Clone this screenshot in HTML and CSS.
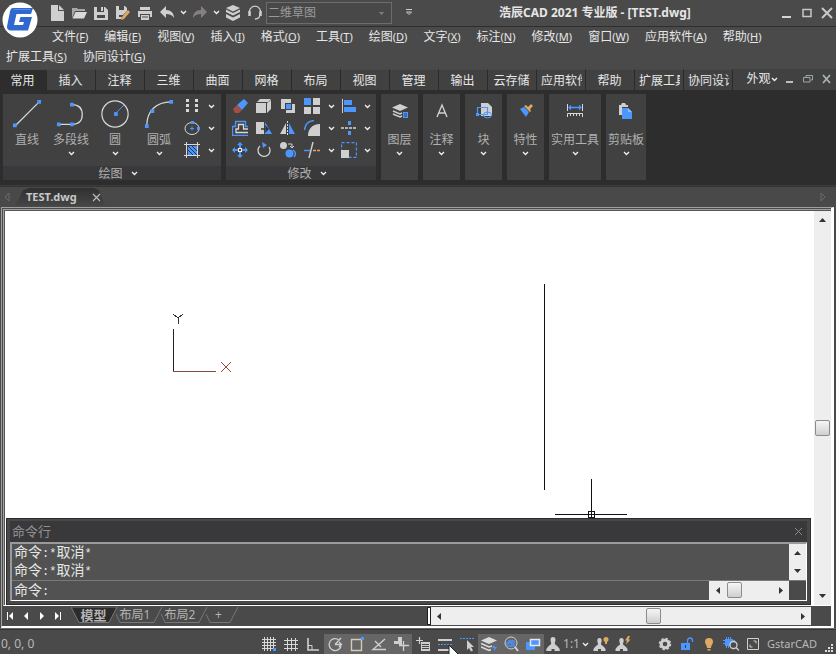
FILE: index.html
```
<!DOCTYPE html>
<html lang="zh-CN">
<head>
    <meta charset="UTF-8">
    <title>浩辰CAD 2021 专业版 - [TEST.dwg]</title>
    <link rel="stylesheet" href="styles.css">
</head>
<body>
    <!-- shared icons -->
    <svg class="defs" width="0" height="0" aria-hidden="true">
        <symbol id="chev" viewBox="0 0 7 5"><path d="M1 1l2.500 2.500L6 1" fill="none" stroke="#f0f0f0" stroke-width="1.300"/></symbol>
        <symbol id="up" viewBox="0 0 7 4"><path d="M0 4l3.500-4L7 4z" fill="#333"/></symbol>
        <symbol id="down" viewBox="0 0 7 4"><path d="M0 0h7L3.500 4z" fill="#333"/></symbol>
        <symbol id="left" viewBox="0 0 4 7"><path d="M4 0v7L0 3.500z" fill="#333"/></symbol>
        <symbol id="right" viewBox="0 0 4 7"><path d="M0 0v7l4-3.500z" fill="#333"/></symbol>
        <symbol id="stack" viewBox="0 0 16 16"><path d="M8 0l7 3L8 6.500 1 3zM1 4.500l7 3.500 7-3.500V7l-7 3.500L1 7zM1 9l7 3.500L15 9v3.500L8 16l-7-3.500z" fill="#cfcfcf"/></symbol>
        <symbol id="person" viewBox="0 0 16 16"><path d="M8 1c1.700 0 2.500 1.200 2.500 2.800S9.800 6 9.800 7.500c0 1 1.400 1.500 2.900 3l2 2.500v2H9.500v-2h-3v2H1.300v-2l2-2.500c1.500-1.500 2.900-2 2.900-3C6.200 6 5.500 5.500 5.500 3.800S6.300 1 8 1z" fill="#cfcfcf"/></symbol>
    </svg>

    <div class="app">
        <svg class="logo" viewBox="0 0 36 36" role="img" aria-label="GstarCAD">
            <circle cx="18" cy="18" r="17.500" fill="#fff"/>
            <path d="M11 6h20l-2 6H14.500l-2.500 11h9l1-3h-5l1.500-5h11.500L26 28.500H9C5.500 28.500 4.500 26 5.300 23L8 9.500C8.500 7 9.500 6 11 6z" fill="#2f68cf"/>
            <path d="M11.500 7.500h17" stroke="#4f8df0" fill="none"/>
        </svg>

        <header class="titlebar">
            <div class="quick">
                <button aria-label="新建"><svg viewBox="0 0 16 16"><path d="M2 0h7v6h6v10H2zM10 0l5 5h-5z" fill="#cfcfcf"/></svg></button>
                <button aria-label="打开"><svg viewBox="0 0 16 16"><path d="M1 13V3h5l1 1h7v2H4z" fill="#a8a8a8"/><path d="M4.500 7H16l-3 6.500H1.500z" fill="#dadada"/></svg></button>
                <button aria-label="保存"><svg viewBox="0 0 16 16"><path d="M1 2h3v5h7V2h1l3 3v10H1zM4 10v3h8v-3zM8 2h2v4H8z" fill="#cfcfcf" fill-rule="evenodd"/></svg></button>
                <button aria-label="另存为"><svg viewBox="0 0 16 16"><path d="M1 1h3v4h5V1h1l2 2v3l-4 4H4v2h3l-1 2H1z" fill="#cfcfcf"/><path d="M7 12l6-7 2 2-6 7-3 1z" fill="#e0a860"/></svg></button>
                <button aria-label="打印"><svg viewBox="0 0 16 16"><path d="M3 2h10v3H3zM1 6h14v6h-2V9H3v3H1zM4 10h8v5H4zM5 11.500v1h6v-1z" fill="#cfcfcf" fill-rule="evenodd"/></svg></button>
                <button aria-label="撤销"><svg viewBox="0 0 16 16"><path d="M1 7l6-6v4c5 0 8 3 8 8-2-3-4-4-8-4v4z" fill="#cfcfcf"/></svg></button>
                <button class="drop" aria-label="撤销列表"><svg><use href="#chev"/></svg></button>
                <button aria-label="重做"><svg viewBox="0 0 16 16"><path d="M15 7L9 1v4c-5 0-8 3-8 8 2-3 4-4 8-4v4z" fill="#858080"/></svg></button>
                <button class="drop" aria-label="重做列表"><svg><use href="#chev"/></svg></button>
                <button aria-label="图层"><svg><use href="#stack"/></svg></button>
                <button aria-label="在线支持"><svg viewBox="0 0 16 16" fill="none" stroke="#cfcfcf"><path d="M3 9a5.500 5.500 0 1 1 10 0c0 4-2 5-5 5" stroke-width="1.300"/><path d="M2.500 6v5M13.500 6v5" stroke-width="2.500"/></svg></button>
            </div>
            <select class="workspace" aria-label="工作空间" disabled>
                <option>二维草图</option>
            </select>
            <button class="more" aria-label="自定义"><svg viewBox="0 0 8 7"><path d="M1 .5h6M1.500 3L4 5.500 6.500 3z" fill="none" stroke="#ccc"/></svg></button>
            <h1>浩辰CAD 2021 专业版 - [TEST.dwg]</h1>
            <div class="winctl">
                <button aria-label="最小化"><svg viewBox="0 0 12 12"><path d="M1 10h9" stroke="#d5d5d5" stroke-width="2"/></svg></button>
                <button aria-label="最大化"><svg viewBox="0 0 12 12"><path d="M1 2.500h8v7H1z" fill="none" stroke="#c8c8c8" stroke-width="1.500"/></svg></button>
                <button aria-label="关闭"><svg viewBox="0 0 12 12"><path d="M1 1l10 10M11 1L1 11" stroke="#c8c8c8" stroke-width="2"/></svg></button>
            </div>
        </header>

        <nav class="menus">
            <div class="menurow first">
                <a href="#">文件<small>(<u>F</u>)</small></a>
                <a href="#">编辑<small>(<u>E</u>)</small></a>
                <a href="#">视图<small>(<u>V</u>)</small></a>
                <a href="#">插入<small>(<u>I</u>)</small></a>
                <a href="#">格式<small>(<u>O</u>)</small></a>
                <a href="#">工具<small>(<u>T</u>)</small></a>
                <a href="#">绘图<small>(<u>D</u>)</small></a>
                <a href="#">文字<small>(<u>X</u>)</small></a>
                <a href="#">标注<small>(<u>N</u>)</small></a>
                <a href="#">修改<small>(<u>M</u>)</small></a>
                <a href="#">窗口<small>(<u>W</u>)</small></a>
                <a href="#">应用软件<small>(<u>A</u>)</small></a>
                <a href="#">帮助<small>(<u>H</u>)</small></a>
            </div>
            <div class="menurow">
                <a href="#">扩展工具<small>(<u>S</u>)</small></a>
                <a href="#">协同设计<small>(<u>G</u>)</small></a>
            </div>
        </nav>

        <div class="tabs">
            <button class="tab active">常用</button>
            <button class="tab">插入</button>
            <button class="tab">注释</button>
            <button class="tab">三维</button>
            <button class="tab">曲面</button>
            <button class="tab">网格</button>
            <button class="tab">布局</button>
            <button class="tab">视图</button>
            <button class="tab">管理</button>
            <button class="tab">输出</button>
            <button class="tab">云存储</button>
            <button class="tab long"><span>应用软件</span></button>
            <button class="tab">帮助</button>
            <button class="tab long"><span>扩展工具</span></button>
            <button class="tab long"><span>协同设计</span></button>
            <div class="docctl">
                <button class="look">外观<svg><use href="#chev"/></svg></button>
                <button aria-label="最小化"><svg viewBox="0 0 10 10"><path d="M2 8h7" stroke="#b8c0c0" stroke-width="2"/></svg></button>
                <button aria-label="还原"><svg viewBox="0 0 10 10" fill="none" stroke="#9aa8a8"><path d="M3 3V1.500h6.500V6H8M.5 3.500H7V8H.5z"/></svg></button>
                <button aria-label="关闭"><svg viewBox="0 0 10 10"><path d="M1 1l7 8M8 1L1 9" stroke="#a8b4b4" stroke-width="1.800"/></svg></button>
            </div>
        </div>

        <div class="ribbon">
            <section class="panel draw">
                <div class="body">
                    <button class="big"><svg viewBox="0 0 32 32"><path d="M4 28L29 3" stroke="#d8d8d8" stroke-width="1.300"/><path d="M1 26h4v4H1zM27 1h4v4h-4z" fill="#4c96ff"/></svg>直线</button>
                    <button class="big"><svg viewBox="0 0 32 32"><path d="M3 27h14c7 0 11-4 11-10.500S24 6 17 6" fill="none" stroke="#d8d8d8" stroke-width="1.300"/><path d="M1 25h4v4H1zM15 25h4v4h-4zM15 4h4v4h-4z" fill="#4c96ff"/></svg>多段线<svg class="chev"><use href="#chev"/></svg></button>
                    <button class="big"><svg viewBox="0 0 32 32"><circle cx="16" cy="16" r="14" fill="none" stroke="#d8d8d8" stroke-width="1.300"/><path d="M17 15l9-9" stroke="#4c96ff"/><path d="M15 14h4v4h-4z" fill="#4c96ff"/></svg>圆<svg class="chev"><use href="#chev"/></svg></button>
                    <button class="big"><svg viewBox="0 0 32 32"><path d="M3 28C3 13 13 3 29 3" fill="none" stroke="#d8d8d8" stroke-width="1.300"/><path d="M1 27h4v4H1zM7 11h4v4H7zM27 1h4v4h-4z" fill="#4c96ff"/></svg>圆弧<svg class="chev"><use href="#chev"/></svg></button>
                    <div class="smalls">
                        <button aria-label="点"><svg viewBox="0 0 16 16"><path d="M2 1h3v3H2zM2 6h3v3H2zM2 11h3v3H2zM11 1h3v3h-3zM11 6h3v3h-3zM11 11h3v3h-3z" fill="#d8d8d8"/></svg></button>
                        <button class="drop" aria-label="点选项"><svg><use href="#chev"/></svg></button>
                        <button aria-label="椭圆"><svg viewBox="0 0 16 16"><ellipse cx="8" cy="8.500" rx="7" ry="6" fill="none" stroke="#d8d8d8"/><path d="M7 1h3v3H7zM13 7h3v3h-3zM6 8h4v1H6zM7.500 6.500h1v4h-1z" fill="#4c96ff"/></svg></button>
                        <button class="drop" aria-label="椭圆选项"><svg><use href="#chev"/></svg></button>
                        <button aria-label="填充"><svg viewBox="0 0 16 16"><path d="M4 4h9v9H4z" fill="#4c96ff"/><path d="M4 8l5 5M4 4l9 9M8 4l5 5" stroke="#234"/><path d="M0 2.500h16M0 13.500h16M2.500 0v16M13.500 0v16" stroke="#d8d8d8"/></svg></button>
                        <button class="drop" aria-label="填充选项"><svg><use href="#chev"/></svg></button>
                    </div>
                </div>
                <button class="caption">绘图<svg class="chev"><use href="#chev"/></svg></button>
            </section>

            <section class="panel modify">
                <div class="body grid">
                    <button aria-label="删除"><svg viewBox="0 0 16 16"><path d="M5 7l7-6 4 4-6 7z" fill="#4c96ff"/><path d="M1 11l4-4 5 5-3 3H3z" fill="#a05044"/></svg></button>
                    <button aria-label="复制"><svg viewBox="0 0 16 16"><path d="M0 5h10v10H0zM1 4l3-3h11l-3 3zM11 5l4-3v9l-4 4z" fill="#cfcfcf"/></svg></button>
                    <button aria-label="重叠"><svg viewBox="0 0 16 16"><path d="M1 1h10v4H5v6H1zM12 6h3v9H6v-3h6z" fill="#cfcfcf"/><path d="M6 6h5v5H6z" fill="#4c96ff"/></svg></button>
                    <button aria-label="阵列"><svg viewBox="0 0 16 16"><path d="M0 0h7v7H0z" fill="#4c96ff"/><path d="M9 0h7v7H9zM0 9h7v7H0zM9 9h7v7H9z" fill="#cfcfcf"/></svg></button>
                    <button class="drop" aria-label="阵列选项"><svg><use href="#chev"/></svg></button>
                    <button aria-label="对齐"><svg viewBox="0 0 16 16"><path d="M1 1h1v14H1z" fill="#cfcfcf"/><path d="M3 2h8v5H3zM3 9h12v5H3z" fill="#4c96ff"/></svg></button>
                    <button class="drop" aria-label="对齐选项"><svg><use href="#chev"/></svg></button>
                    <button aria-label="偏移"><svg viewBox="0 0 16 16" fill="none"><path d="M16 15.500H.5v-9h3v-5h10v5H16" stroke="#4c96ff" stroke-width="1.300"/><path d="M16 12.500H4V9h2.500V4.500h5V9H16" stroke="#d8d8d8" stroke-width="1.300"/></svg></button>
                    <button aria-label="拉伸"><svg viewBox="0 0 16 16"><path d="M0 2h8v12H0z" fill="#cfcfcf"/><path d="M9 2l7 12H9z" fill="#4c96ff"/><path d="M5 9h7M9 6l3 3-3 3" fill="none" stroke="#333" stroke-width="1.500"/></svg></button>
                    <button aria-label="镜像"><svg viewBox="0 0 16 16"><path d="M6 3v11H0z" fill="#cfcfcf"/><path d="M9 3v11h6z" fill="#4c96ff"/><path d="M7.500 1v14" stroke="#d8d8d8" stroke-dasharray="2 1"/></svg></button>
                    <button aria-label="圆角"><svg viewBox="0 0 16 16"><path d="M.5 10C1 4 4 1 10 .5" fill="none" stroke="#4c96ff" stroke-width="1.400"/><path d="M4 16c0-7 4-12 12-12v12z" fill="#cfcfcf"/></svg></button>
                    <button class="drop" aria-label="圆角选项"><svg><use href="#chev"/></svg></button>
                    <button aria-label="打断"><svg viewBox="0 0 16 16"><path d="M0 8h16" stroke="#d8d8d8" stroke-width="1.300" stroke-dasharray="3 1"/><path d="M7 1h3v4H7zM7 11h3v4H7z" fill="#4c96ff"/></svg></button>
                    <button class="drop" aria-label="打断选项"><svg><use href="#chev"/></svg></button>
                    <button aria-label="移动"><svg viewBox="0 0 16 16"><path d="M8 0l3 3H9v4h4V5l3 3-3 3V9H9v4h2l-3 3-3-3h2V9H3v2L0 8l3-3v2h4V3H5z" fill="#4c96ff"/><path d="M6 6h4v4H6z" fill="#eee"/><path d="M7 7h2v2H7z" fill="#444"/></svg></button>
                    <button aria-label="旋转"><svg viewBox="0 0 16 16"><path d="M4 4a6 6 0 1 0 9 1" fill="none" stroke="#cfcfcf" stroke-width="1.300"/><path d="M6 0l5 3-4 3z" fill="#4c96ff"/></svg></button>
                    <button aria-label="缩放复制"><svg viewBox="0 0 16 16"><circle cx="3.500" cy="3.500" r="3.500" fill="#cfcfcf"/><path d="M8 2h4v4m-2-2l2 2 2-2" fill="none" stroke="#cfcfcf"/><path d="M13 8c3 2 3 5 1 7" fill="none" stroke="#4c96ff" stroke-width="1.500"/><circle cx="9.500" cy="11.500" r="4" fill="#4c96ff"/></svg></button>
                    <button aria-label="修剪"><svg viewBox="0 0 16 16"><path d="M0 8.500h6" stroke="#4c96ff" stroke-width="1.400"/><path d="M9 8.500h7" stroke="#e0a860" stroke-width="1.400" stroke-dasharray="3 1"/><path d="M5 16L9 0" stroke="#cfcfcf" stroke-width="1.400"/></svg></button>
                    <button class="drop" aria-label="修剪选项"><svg><use href="#chev"/></svg></button>
                    <button aria-label="缩放"><svg viewBox="0 0 16 16"><path d="M.5.500h15v15H.500z" fill="none" stroke="#4c96ff" stroke-width="1.300" stroke-dasharray="3 2"/><path d="M0 8h8v8H0z" fill="#cfcfcf"/></svg></button>
                    <button class="drop" aria-label="缩放选项"><svg><use href="#chev"/></svg></button>
                </div>
                <button class="caption">修改<svg class="chev"><use href="#chev"/></svg></button>
            </section>

            <button class="panel folded"><svg viewBox="0 0 16 16"><path d="M8 1l8 3.500L8 8 0 4.500z" fill="#cfcfcf"/><path d="M1 8l7 3 2-1M1 11l7 3 2-1" fill="none" stroke="#cfcfcf" stroke-width="1.400"/><path d="M11 9h5v6h-5z" fill="#4c96ff"/><path d="M12 11h3M12 13h3" stroke="#345"/></svg>图层<svg class="chev"><use href="#chev"/></svg></button>
            <button class="panel folded"><svg viewBox="0 0 16 16"><path d="M3 14L8 2l5 12M4.500 10h7" fill="none" stroke="#cfcfcf" stroke-width="1.400"/></svg>注释<svg class="chev"><use href="#chev"/></svg></button>
            <button class="panel folded"><svg viewBox="0 0 16 16"><path d="M5 0h7l4 4v9H5z" fill="#cfcfcf"/><path d="M1.500 4.500h10v7h-10z" fill="none" stroke="#4c96ff" stroke-width="1.200"/><ellipse cx="11.500" cy="12" rx="4" ry="3" fill="none" stroke="#4c96ff"/><path d="M0 10h3v3H0z" fill="#4c96ff"/></svg>块<svg class="chev"><use href="#chev"/></svg></button>
            <button class="panel folded"><svg viewBox="0 0 16 16"><path d="M2 6l4-2 5 5-3 5z" fill="#4c96ff"/><path d="M6 3l2-1 2 2 3-3 2 2-3 3 1 2-1 1z" fill="#e0a860"/></svg>特性<svg class="chev"><use href="#chev"/></svg></button>
            <button class="panel folded tools"><svg viewBox="0 0 16 16" fill="none"><path d="M.5 1v7M15.500 1v7" stroke="#d8d8d8"/><path d="M2 4.500h12M4 2.500l-2 2 2 2M12 2.500l2 2-2 2" stroke="#4c96ff" stroke-width="1.300"/><path d="M.5 14v-3.500h15V14M3.500 11v2M6.500 11v2M9.500 11v2M12.500 11v2" stroke="#d8d8d8"/></svg>实用工具<svg class="chev"><use href="#chev"/></svg></button>
            <button class="panel folded clip"><svg viewBox="0 0 16 16"><path d="M1 2h2l1-2h3l1 2h2v2H4v8H1z" fill="#cfcfcf"/><path d="M4 5h6l4 4v7H4z" fill="#4c96ff"/><path d="M10 5l4 4h-4z" fill="#8fbcff"/></svg>剪贴板<svg class="chev"><use href="#chev"/></svg></button>
        </div>

        <div class="doctabs">
            <button class="scroller" aria-label="向左"><svg viewBox="0 0 6 10"><path d="M5 1v8L1 5z" fill="none" stroke="#6a6a6a"/></svg></button>
            <div class="doctab">
                <span>TEST.dwg</span>
                <button aria-label="关闭"><svg viewBox="0 0 9 9"><path d="M1 1l7 7M8 1L1 8" stroke="#bbb" stroke-width="1.200"/></svg></button>
            </div>
            <button class="scroller" aria-label="向右"><svg viewBox="0 0 6 10"><path d="M1 1v8l4-4z" fill="none" stroke="#6a6a6a"/></svg></button>
        </div>

        <main class="frame">
            <div class="view">
                <div class="work">
                    <div class="canvas">
                        <svg width="808" height="306" shape-rendering="crispEdges">
                            <!-- UCS icon -->
                            <path d="M168.500 117v43" stroke="#222"/>
                            <path d="M168 159.500h43" stroke="#8a4a3a"/>
                            <path d="M168 102l5 4 5-4M173.500 106v6" fill="none" stroke="#333"/>
                            <path d="M216 150l10 10M226 150l-10 10" stroke="#a0452f"/>
                            <!-- drawn line -->
                            <path d="M539.500 72v206" stroke="#111"/>
                            <!-- crosshair -->
                            <path d="M586.500 267v39M550 302.500h72" stroke="#111"/>
                            <path d="M583.500 299.500h6v6h-6z" fill="none" stroke="#111"/>
                        </svg>
                    </div>
                    <section class="command">
                        <div class="cmdtitle">命令行<button aria-label="关闭"><svg viewBox="0 0 9 9"><path d="M1 1l7 7M8 1L1 8" stroke="#888"/></svg></button></div>
                        <div class="cmdbox">
                            <div class="history">
                                <div class="lines">
                                    <p>命令<span>:*</span>取消<span>*</span></p>
                                    <p>命令<span>:*</span>取消<span>*</span></p>
                                </div>
                                <div class="vbar">
                                    <button aria-label="向上"><svg><use href="#up"/></svg></button>
                                    <button aria-label="向下"><svg><use href="#down"/></svg></button>
                                </div>
                            </div>
                            <div class="prompt">
                                <label for="cmd">命令<span>:</span></label>
                                <input id="cmd" type="text">
                                <div class="hbar">
                                    <button aria-label="向左"><svg><use href="#left"/></svg></button>
                                    <i class="thumb"></i>
                                    <i class="gap" style="flex-grow:1"></i>
                                    <button aria-label="向右"><svg><use href="#right"/></svg></button>
                                </div>
                                <i class="corner"></i>
                            </div>
                        </div>
                    </section>
                </div>
                <div class="vbar main">
                    <button aria-label="向上"><svg><use href="#up"/></svg></button>
                    <i class="gap" style="flex-grow:56"></i>
                    <i class="thumb"></i>
                    <i class="gap" style="flex-grow:44"></i>
                    <button aria-label="向下"><svg><use href="#down"/></svg></button>
                </div>
            </div>
            <div class="layouts">
                <div class="sheets">
                    <button class="nav" aria-label="第一个"><svg viewBox="0 0 8 8"><path d="M1 0h1v8H1zM7 0v8L3 4z" fill="#fff"/></svg></button>
                    <button class="nav" aria-label="上一个"><svg viewBox="0 0 8 8"><path d="M6 0v8L2 4z" fill="#fff"/></svg></button>
                    <button class="nav" aria-label="下一个"><svg viewBox="0 0 8 8"><path d="M2 0v8l4-4z" fill="#fff"/></svg></button>
                    <button class="nav" aria-label="最后一个"><svg viewBox="0 0 8 8"><path d="M1 0v8l4-4zM6 0h1v8H6z" fill="#fff"/></svg></button>
                    <button class="sheet on"><svg viewBox="0 0 47 17" preserveAspectRatio="none"><path d="M0 0l8 15.500h30L46 0z" fill="#2b2b2b" stroke="#777"/></svg><span>模型</span></button>
                    <button class="sheet"><svg viewBox="0 0 47 17" preserveAspectRatio="none"><path d="M0 7l4 8.500h34L46 0" fill="none" stroke="#777"/></svg><span>布局1</span></button>
                    <button class="sheet"><svg viewBox="0 0 47 17" preserveAspectRatio="none"><path d="M0 7l4 8.500h34L46 0" fill="none" stroke="#777"/></svg><span>布局2</span></button>
                    <button class="sheet add" aria-label="新建布局"><svg viewBox="0 0 47 17" preserveAspectRatio="none"><path d="M0 7l4 8.500h20L32 0" fill="none" stroke="#777"/></svg><span>+</span></button>
                </div>
                <i class="splitter"></i>
                <div class="hbar main">
                    <button aria-label="向左"><svg><use href="#left"/></svg></button>
                    <i class="gap" style="flex-grow:60"></i>
                    <i class="thumb"></i>
                    <i class="gap" style="flex-grow:40"></i>
                    <button aria-label="向右"><svg><use href="#right"/></svg></button>
                </div>
            </div>
        </main>

        <footer class="status">
            <span class="coords">0, 0, 0</span>
            <button aria-label="捕捉"><svg viewBox="0 0 16 16"><path d="M1 3.500h14M1 6.500h14M1 9.500h14M1 12.500h11M3.500 1v14M6.500 1v14M9.500 1v14M12.500 1v11" stroke="#d8d8d8"/><path d="M12 12h3v3h-3z" fill="#4c96ff"/></svg></button>
            <button aria-label="栅格"><svg viewBox="0 0 16 16"><path d="M1 4.500h14M1 8.500h14M1 12.500h14M4.500 2v13M8.500 2v13M12.500 2v13" stroke="#d8d8d8"/></svg></button>
            <button aria-label="正交"><svg viewBox="0 0 16 16" fill="none" stroke="#cfcfcf"><path d="M3 2v12h11" stroke-width="1.600"/><path d="M3 9.500h4V14"/></svg></button>
            <button class="on" aria-label="极轴"><svg viewBox="0 0 16 16" fill="none" stroke="#cfcfcf" stroke-width="1.300"><path d="M12 4a6 6 0 1 0 2 6M8 8.500h7M8 8.500L14 2M12 6l2.500 2.500L12 11"/></svg></button>
            <button class="on" aria-label="对象捕捉"><svg viewBox="0 0 16 16"><path d="M2.500 3.500h10v11h-10z" fill="none" stroke="#d8c8b8" stroke-width="1.400"/><path d="M12 1h3v3h-3z" fill="#4c96ff"/></svg></button>
            <button class="on" aria-label="对象追踪"><svg viewBox="0 0 16 16"><path d="M14 3L2 13.500h13M4 5l6 6" fill="none" stroke="#cfcfcf" stroke-width="1.400"/></svg></button>
            <button class="on" aria-label="动态UCS"><svg viewBox="0 0 16 16"><path d="M5 1h4v9H6V8H1V5h4z" fill="#cfcfcf"/><path d="M10.500 5v10M6 9.500h10" stroke="#cfcfcf" stroke-width="1.300"/></svg></button>
            <button aria-label="动态输入"><svg viewBox="0 0 16 16"><path d="M4.500 1v7M1 4.500h7" stroke="#cfcfcf" stroke-width="1.200"/><path d="M6 6h9v9H6zM7 8v1h7V8zM7 10v1h7v-1zM7 12v1h7v-1z" fill="#cfcfcf" fill-rule="evenodd"/></svg></button>
            <button class="lw" aria-label="线宽"><svg viewBox="0 0 16 16"><path d="M1 4h14M1 14h14" stroke="#cfcfcf" stroke-width="2"/><path d="M1 8.500h14" stroke="#4c96ff" stroke-dasharray="2 1"/></svg><svg class="pointer" viewBox="0 0 12 18"><path d="M1 1v14l3-3 2 5 3-1-2-5h4z" fill="#fff" stroke="#222"/></svg></button>
            <button aria-label="选择循环"><svg viewBox="0 0 16 16"><path d="M1 2.500h14" stroke="#4c96ff" stroke-dasharray="2 1"/><path d="M8 4v10l2-2 2 3.500 2-1-2-3.500h3z" fill="#cfcfcf"/></svg></button>
            <button class="on" aria-label="图层过滤"><svg viewBox="0 0 16 16"><path d="M8 1l8 3.500L8 8 0 4.500z" fill="#dcdcdc"/><path d="M0 7.500l8 3.500 3-1M0 11l8 3.500 2-1" fill="none" stroke="#dcdcdc" stroke-width="1.500"/><path d="M13 9l-2 3h2v3l3-4h-2z" fill="#4c96ff"/></svg></button>
            <button class="on" aria-label="快捷特性"><svg viewBox="0 0 16 16"><circle cx="8" cy="7" r="6" fill="none" stroke="#cfcfcf"/><path d="M12 11l3 4" stroke="#cfcfcf" stroke-width="2"/><path d="M5 5h6v6M4 7h5v3H4z" fill="none" stroke="#4c96ff" stroke-width="1.300"/></svg></button>
            <button class="on" aria-label="显示"><svg viewBox="0 0 16 16"><path d="M1 6h9v8H1z" fill="#4c96ff"/><path d="M5.500 3.500h9v6h-9z" fill="#4c96ff" stroke="#e8e8e8" stroke-width="1.500"/></svg></button>
            <button class="scale"><svg><use href="#person"/></svg>1:1<svg class="chev"><use href="#chev"/></svg></button>
            <button aria-label="注释可见"><svg viewBox="0 0 16 16"><path d="M6.500 2C8 2 8.700 3 8.700 4.500S8 7 8 8s1.500 1.500 3 3l1.500 2v2H8v-2H5v2H.5v-2L2 11c1.500-1.500 3-2 3-3S4.300 6 4.300 4.500 5 2 6.500 2z" fill="#cfcfcf"/><circle cx="13" cy="3.500" r="2.500" fill="#e0a860"/><path d="M12 5h2v3h-2z" fill="#e0a860"/></svg></button>
            <button aria-label="自动缩放"><svg viewBox="0 0 16 16"><path d="M6.500 2C8 2 8.700 3 8.700 4.500S8 7 8 8s1.500 1.500 3 3l1.500 2v2H8v-2H5v2H.5v-2L2 11c1.500-1.500 3-2 3-3S4.300 6 4.300 4.500 5 2 6.500 2z" fill="#cfcfcf"/><path d="M13 0l-3 4.500h2l-1 4 4.500-5h-2L15 0z" fill="#e0a860"/></svg></button>
            <i class="space"></i>
            <button aria-label="设置"><svg viewBox="0 0 16 16"><circle cx="8" cy="8" r="3.800" fill="none" stroke="#cfcfcf" stroke-width="3"/><circle cx="8" cy="8" r="5.500" fill="none" stroke="#cfcfcf" stroke-width="1.500" stroke-dasharray="2.300 2"/></svg></button>
            <button aria-label="锁定"><svg viewBox="0 0 16 16"><path d="M2 7h9v7H2z" fill="#4c96ff"/><path d="M8.500 7V4.500a2.500 2.500 0 0 1 5 0V6" fill="none" stroke="#4c96ff" stroke-width="1.300"/><path d="M6 9h1v3H6z" fill="#246"/></svg></button>
            <button aria-label="隔离"><svg viewBox="0 0 16 16"><path d="M8 2a4 4 0 0 1 4 4c0 2-2 3-2 6H6c0-3-2-4-2-6a4 4 0 0 1 4-4zM6.500 13h3v1.500h-3z" fill="#e0a860"/></svg></button>
            <button aria-label="性能"><svg viewBox="0 0 16 16"><path d="M2 3h8v7H2z" fill="#4c96ff"/><path d="M3.500 1v11M5.500 1v11M7.500 1v11M0 4.500h12M0 7.500h12" stroke="#4c96ff"/><circle cx="10.500" cy="9" r="3.500" fill="#4a4a4a" stroke="#cfcfcf" stroke-width="1.300"/><path d="M13 11.500l3 3" stroke="#cfcfcf" stroke-width="1.500"/></svg></button>
            <button aria-label="全屏"><svg viewBox="0 0 16 16" fill="none" stroke="#cfcfcf"><path d="M2.500 2.500h11v11h-11z"/><path d="M8.500 5h2.500v2.500M7.500 11H5V8.500"/></svg></button>
            <span class="brand">GstarCAD</span>
            <svg class="grip" viewBox="0 0 9 9"><path d="M6 0h2v2H6zM3 3h2v2H3zM6 3h2v2H6zM0 6h2v2H0zM3 6h2v2H3zM6 6h2v2H6z" fill="#ddd"/></svg>
        </footer>
    </div>
</body>
</html>
```
FILE: styles.css
```
* {
    box-sizing: border-box;
}

body {
    margin: 0;
    background: #4a4a4a;
    color: #e6e6e6;
    font-family: "Noto Sans", "Noto Sans CJK SC", sans-serif;
    font-size: 12px;
    line-height: 18px;
}

button {
    display: flex;
    align-items: center;
    justify-content: center;
    margin: 0;
    padding: 0;
    border: 0;
    background: none;
    color: inherit;
    font: inherit;
    white-space: nowrap;
}

svg {
    display: block;
    flex: none;
    width: 16px;
    height: 16px;
}

a {
    color: inherit;
    text-decoration: none;
}

.defs {
    position: absolute;
    width: 0;
    height: 0;
}

.app {
    position: relative;
    display: flex;
    flex-direction: column;
    height: 100vh;
    overflow: hidden;
}

.chev,
.drop svg {
    width: 7px;
    height: 5px;
}

/* title bar */
.logo {
    position: absolute;
    top: 2px;
    left: 2px;
    width: 36px;
    height: 36px;
    z-index: 2;
}

.titlebar {
    display: flex;
    align-items: center;
    flex: none;
    height: 27px;
    padding: 0 0 1px 46px;
    border-bottom: 1px solid #2e2e2e;
}

.quick {
    display: flex;
}

.quick button {
    width: 22px;
    height: 22px;
}

.quick .drop {
    width: 11px;
}

.workspace {
    width: 126px;
    height: 22px;
    padding: 0 8px 0 1px;
    border: 1px solid #6c6c6c;
    background:
        linear-gradient(#777, #777) right 7px top 9px / 5px 1px no-repeat,
        linear-gradient(#777, #777) right 8px top 10px / 3px 1px no-repeat,
        linear-gradient(#777, #777) right 9px top 11px / 1px 1px no-repeat #484848;
    appearance: none;
    color: #9a9a9a;
    opacity: 1;
    font: inherit;
}

.more {
    width: 34px;
}

.more svg {
    width: 8px;
    height: 7px;
}

.titlebar h1 {
    flex: 1;
    margin: 0;
    padding-left: 73px;
    font-size: 12px;
    font-weight: bold;
    white-space: nowrap;
}

.winctl {
    display: flex;
}

.winctl button {
    width: 21px;
    height: 22px;
}

.winctl button:last-child {
    width: 18px;
}

.winctl svg {
    width: 12px;
    height: 12px;
}

/* menus */
.menus {
    flex: none;
    height: 42px;
}

.menurow {
    display: flex;
    gap: 16px;
    height: 20px;
    padding-left: 6px;
    line-height: 20px;
    white-space: nowrap;
}

.menurow.first {
    padding-left: 52px;
}

.menurow small {
    font-size: 11px;
}

/* ribbon tabs */
.tabs {
    display: flex;
    flex: none;
    height: 21px;
    background: #414141;
}

.tab {
    flex: none;
    width: 49px;
    padding: 1px 1px 0 0;
    border-right: 1px solid #2a2a2a;
    border-top: 1px solid #484848;
}

.tab.active {
    width: 47px;
    background: #2d2d2d;
    border-radius: 0 4px 0 0;
}

.tab.long {
    justify-content: flex-start;
    padding: 1px 3px 0 4px;
}

.tab.long span {
    overflow: hidden;
}

.docctl {
    display: flex;
    flex: 1;
    justify-content: flex-end;
    padding-bottom: 1px;
}

.docctl button {
    width: 19px;
}

.docctl svg {
    width: 10px;
    height: 10px;
}

.docctl .look {
    width: 34px;
}

.docctl .look svg {
    width: 7px;
    height: 5px;
}

/* ribbon */
.ribbon {
    display: flex;
    flex: none;
    gap: 5px;
    height: 96px;
    padding: 4px 3px 5px;
    background: #2d2d2d;
    border-bottom: 1px solid #3c3c3c;
    color: #b0b0b0;
}

.panel {
    display: flex;
    flex-direction: column;
    flex: none;
    background: #414141;
}

.draw {
    width: 218px;
}

.modify {
    width: 150px;
}

.body {
    display: flex;
    flex: 1;
    padding: 1px 2px 0;
}

.caption {
    gap: 8px;
    height: 14px;
    padding: 1px 0 0 12px;
    background: #39393b;
    line-height: 14px;
}

.big {
    flex-direction: column;
    justify-content: flex-start;
    width: 44px;
    padding-top: 4px;
}

.big svg {
    width: 30px;
    height: 30px;
    margin-bottom: 2px;
}

.big .chev {
    width: 7px;
    height: 5px;
    margin: 2px 0 0;
}

.smalls,
.grid {
    display: grid;
    align-content: start;
    grid-auto-rows: 22px;
}

.smalls {
    grid-template-columns: 22px 16px;
}

.grid {
    grid-template-columns: 24px 24px 24px 24px 14px 22px 14px;
}

.folded {
    justify-content: flex-start;
    width: 37px;
    padding-top: 9px;
}

.folded .chev {
    margin-top: 2px;
}

.folded svg:first-child {
    margin-bottom: 12px;
}

.tools {
    width: 52px;
}

.clip {
    width: 40px;
}

/* drawing tabs */
.doctabs {
    display: flex;
    flex: none;
    height: 21px;
    padding: 1px 10px 1px 4px;
    background: #494949;
    border-top: 1px solid #333;
}

.scroller svg {
    width: 6px;
    height: 10px;
}

.doctab {
    display: flex;
    align-items: center;
    justify-content: space-between;
    width: 90px;
    margin: 0 auto 0 5px;
    padding: 0 4px 0 11px;
    background: linear-gradient(#303030, #464646);
    clip-path: polygon(0 100%, 8px 12%, 14px 0, 79px 0, 84px 12%, 100% 100%);
    color: #c8c8c8;
    font-size: 11px;
    font-weight: bold;
}

.doctab svg {
    width: 9px;
    height: 9px;
}

/* drawing area */
.frame {
    display: flex;
    flex: 1;
    flex-direction: column;
    min-height: 0;
    margin: 0 2px 0 1px;
    border: solid #a0a0a0;
    border-width: 1px 3px 2px 1px;
    border-right-color: #fff;
    border-bottom-color: #fff;
}

.view {
    display: flex;
    flex: 1;
    min-height: 0;
    margin: 1px 0 0 1px;
    padding: 1px 0 0 1px;
    border: solid #a0a0a0;
    border-width: 1px 0 1px 1px;
    border-bottom-color: #fff;
    background: #555;
}

.work {
    display: flex;
    flex: 1;
    flex-direction: column;
    min-width: 0;
    padding-top: 1px;
    background: #fff;
}

.canvas {
    flex: 1;
    min-height: 0;
    overflow: hidden;
}

.canvas svg {
    width: 808px;
    height: 306px;
}

.command {
    flex: none;
    margin: 0 3px 0 1px;
    padding: 2px 3px 3px;
    border: 1px solid #2c2c2c;
    background: #484848;
}

.cmdtitle {
    display: flex;
    justify-content: space-between;
    height: 21px;
    padding: 0 4px 0 2px;
    background: #39393b;
    color: #909090;
    font-size: 13px;
    line-height: 21px;
}

.cmdtitle svg {
    width: 9px;
    height: 9px;
}

.cmdbox {
    border: 2px solid #9a9a9a;
    border-width: 2px 1px 1px 2px;
    border-right-color: #fff;
    border-bottom-color: #fff;
    background: #525252;
    font-family: "Liberation Mono", "Noto Sans CJK SC", monospace;
    font-size: 14px;
}

.cmdbox span {
    font-size: 12px;
}

.history {
    display: flex;
    border-bottom: 1px solid #7a7a7a;
}

.lines {
    flex: 1;
}

.history p {
    height: 18px;
    margin: 0;
    padding-left: 2px;
    overflow: hidden;
}

.prompt {
    display: flex;
    height: 19px;
    line-height: 20px;
}

.prompt label {
    padding-left: 2px;
}

.prompt input {
    flex: 1;
    min-width: 0;
    padding: 0;
    border: 0;
    background: none;
    color: inherit;
    font: inherit;
    outline: none;
}

.prompt .hbar {
    width: 80px;
}

.corner {
    width: 17px;
    background: #4a4a4a;
}

/* scroll bars */
.vbar,
.hbar {
    display: flex;
    justify-content: space-between;
    flex: none;
    background: #eee;
}

.vbar {
    flex-direction: column;
    width: 17px;
}

.vbar button {
    height: 18px;
}

.hbar button {
    width: 17px;
}

.vbar button svg {
    width: 7px;
    height: 4px;
}

.hbar button svg {
    width: 4px;
    height: 7px;
}

.thumb {
    width: 15px;
    height: 16px;
    margin: 1px;
    border: 1px solid #8c8c8c;
    border-radius: 2px;
    background: linear-gradient(#f6f6f6, #cfcfcf);
}

/* layout tabs */
.layouts {
    display: flex;
    flex: none;
    height: 20px;
    padding: 1px 20px 1px 0;
}

.sheets {
    display: flex;
    width: 52.5%;
}

.nav {
    width: 16px;
}

.nav svg {
    width: 8px;
    height: 8px;
}

.sheet {
    position: relative;
    align-items: flex-start;
    width: 45px;
    padding-right: 7px;
    color: #b4b4b4;
    line-height: 16px;
}

.sheet svg {
    position: absolute;
    top: 0;
    left: 0;
    width: 47px;
    height: 17px;
}

.sheet span {
    position: relative;
}

.sheet.on {
    margin-left: 5px;
    padding-right: 0;
    font-weight: bold;
    font-size: 13px;
}

.sheet.add {
    width: 32px;
}

.splitter {
    width: 4px;
    border: 1px solid #222;
    background: #fff;
}

.hbar.main {
    flex: 1;
}

/* status bar */
.status {
    display: flex;
    flex: none;
    height: 26px;
    padding: 5px 2px 1px 1px;
    border-top: 1px solid #666;
    box-shadow: inset 0 1px #333;
    color: #b8b8b8;
    line-height: 20px;
}

.coords {
    flex: 1;
}

.status button {
    width: 22px;
    height: 20px;
}

.status .on {
    background: #666;
}

.status .lw {
    position: relative;
}

.status .pointer {
    position: absolute;
    top: 10px;
    left: 14px;
    width: 12px;
    height: 18px;
    z-index: 1;
}

.status .scale {
    width: 46px;
    gap: 2px;
}

.space {
    width: 20px;
}

.brand {
    padding-left: 3px;
    font-size: 11px;
}

.grip {
    align-self: flex-end;
    width: 9px;
    height: 9px;
    margin-left: 8px;
}
```
